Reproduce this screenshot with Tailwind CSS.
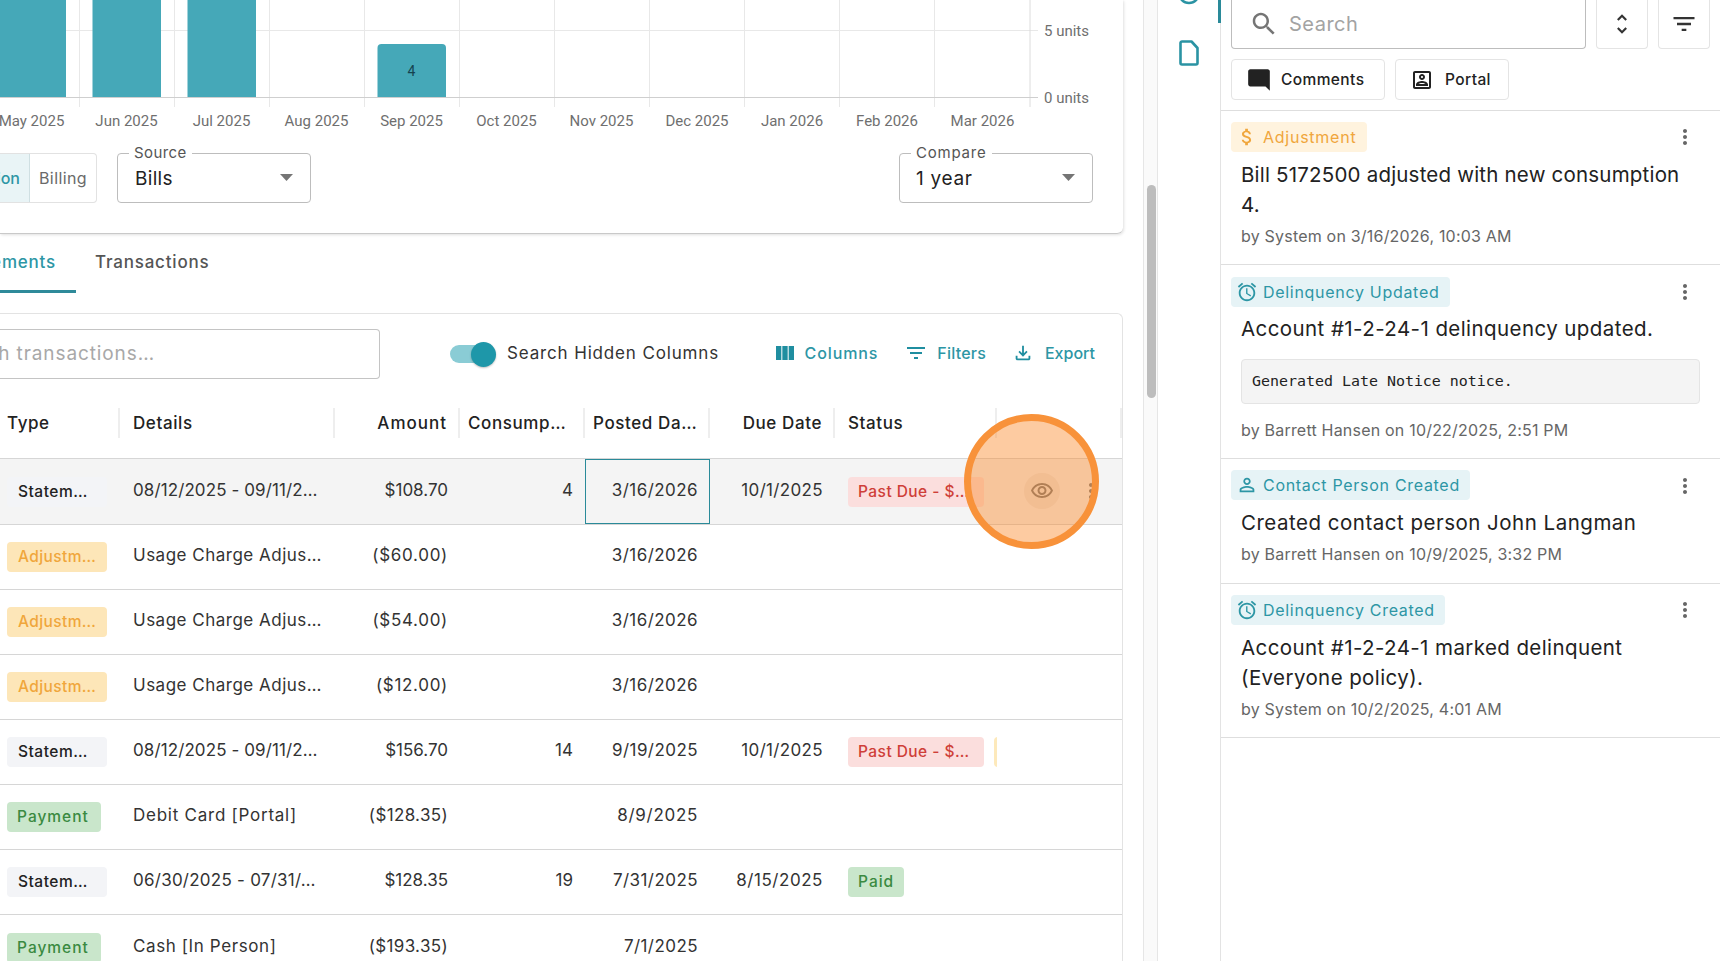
<!DOCTYPE html>
<html>
<head>
<meta charset="utf-8">
<script src="https://cdn.jsdelivr.net/npm/@tailwindcss/browser@4"></script>
</head>
<body class="bg-white">
<div class="relative flex h-[961px] w-[1720px] overflow-hidden bg-white font-['Inter',sans-serif] text-[#222]">

  <!-- MAIN COLUMN -->
  <main class="w-[1143px] shrink-0 overflow-hidden">
    <section class="h-[234px] w-[1123px] rounded-br-md border-b border-[#c9c9c9] shadow-[1px_1px_3px_rgba(0,0,0,0.12)]">
      <svg width="1123" height="130" class="block font-['Roboto',sans-serif]">
        <g stroke="#e8e8e8" stroke-width="1">
          <path d="M0 30.5H1038"/>
          <path d="M79.5 0V107M174.5 0V107M269.5 0V107M364.5 0V107M459.5 0V107M554.5 0V107M649.5 0V107M744.500 0V107M839.500 0V107M934.500 0V107"/>
          <path d="M1030 0V107" stroke="#dcdcdc"/>
        </g>
        <path d="M0 97.5H1038" stroke="#cfcfcf" stroke-width="1"/>
        <g fill="#45a8b8">
          <rect x="-10" y="-10" width="76" height="107"/>
          <rect x="92.5" y="-10" width="68.500" height="107"/>
          <rect x="187.5" y="-10" width="68.500" height="107"/>
          <path d="M377.500 97V48a4 4 0 0 1 4-4h60.500a4 4 0 0 1 4 4v49z"/>
        </g>
        <text x="411.5" y="76" text-anchor="middle" font-size="14" fill="#15434f">4</text>
        <g font-size="15" fill="#6f6f6f" text-anchor="middle">
          <text x="31.5" y="126">May 2025</text><text x="126.5" y="126">Jun 2025</text><text x="221.5" y="126">Jul 2025</text><text x="316.5" y="126">Aug 2025</text><text x="411.5" y="126">Sep 2025</text><text x="506.5" y="126">Oct 2025</text><text x="601.5" y="126">Nov 2025</text><text x="697" y="126">Dec 2025</text><text x="792" y="126">Jan 2026</text><text x="887" y="126">Feb 2026</text><text x="982.5" y="126">Mar 2026</text>
        </g>
        <g font-size="15" fill="#6f6f6f">
          <text x="1044" y="36">5 units</text><text x="1044" y="103">0 units</text>
        </g>
      </svg>
      <div class="mt-[23px] flex h-[50px] items-start pr-[30px]">
        <div class="flex h-[50px] w-[97px] overflow-hidden rounded-r border border-l-0 border-[#e2e2e2] text-[16px]">
          <div class="flex h-full w-[30px] shrink-0 items-center justify-end overflow-hidden border-r border-[#cfdfe2] bg-[#e9f4f6] pb-[1px] pr-[9px] font-medium text-[#2d96a5]">Consumption</div>
          <div class="flex items-center pb-[1px] pl-[9px] tracking-[0.4px] text-[#6a6a6a]">Billing</div>
        </div>
        <div class="relative ml-[20px] flex h-[50px] w-[194px] items-center rounded border border-[#bdbdbd] pl-[17px] pt-[2px] text-[19px] tracking-[0.3px] text-[#222]">
          Bills
          <span class="absolute -top-[10px] left-[11px] bg-white px-[5px] text-[15px] leading-[18px] tracking-[0.4px] text-[#555]">Source</span>
          <svg class="absolute right-[17px] top-[20px]" width="13" height="8" viewBox="0 0 13 8"><path d="M0 0h13L6.500 7z" fill="#757575"/></svg>
        </div>
        <div class="relative ml-auto flex h-[50px] w-[194px] items-center rounded border border-[#bdbdbd] pl-[16px] pt-[2px] text-[19px] tracking-[0.7px] text-[#222]">
          1 year
          <span class="absolute -top-[10px] left-[11px] bg-white px-[5px] text-[15px] leading-[18px] tracking-[0.8px] text-[#555]">Compare</span>
          <svg class="absolute right-[17px] top-[20px]" width="13" height="8" viewBox="0 0 13 8"><path d="M0 0h13L6.500 7z" fill="#757575"/></svg>
        </div>
      </div>
    </section>

    <div class="flex h-[59px] items-center text-[17px] tracking-[0.8px]">
      <div class="flex h-full w-[76px] items-center justify-end overflow-hidden border-b-[3px] border-[#2f8a9a] pr-[20px] pt-[2px] font-medium text-[#2d96a5]">Statements</div>
      <div class="ml-[19px] pb-[1px] font-medium text-[#555]">Transactions</div>
    </div>

    <section class="mt-[20px] w-[1123px] overflow-hidden rounded-tr-md border-r border-t border-[#e3e3e3]">
      <div class="flex h-[74px] items-start pr-[27px] pt-[15px]">
        <div class="flex h-[50px] w-[380px] items-center rounded-r border border-l-0 border-[#c4c4c4]">
          <div class="flex w-[155px] justify-end overflow-hidden whitespace-nowrap pt-[1px] text-[19px] tracking-[0.9px] text-[#a8a8a8]">Search transactions…</div>
        </div>
        <div class="relative ml-[70px] mt-[16px] h-[18px] w-[40px] rounded-full bg-[#8accd5]">
          <span class="absolute -right-[6px] -top-[3px] h-[25px] w-[25px] rounded-full bg-[#1e97a9] shadow-[0_1px_2px_rgba(0,0,0,0.25)]"></span>
        </div>
        <div class="ml-[17px] mt-[11px] whitespace-nowrap text-[17px] leading-[26px] tracking-[0.85px] text-[#333]">Search Hidden Columns</div>
        <div class="ml-auto mt-[11px] flex items-center gap-[26px] text-[16px] font-medium leading-[26px] text-[#2d96a5]">
          <span class="flex items-center gap-[8px] tracking-[0.9px]"><svg width="24" height="24" viewBox="0 0 24 24" fill="#1f8ea0"><path d="M14.670 5v14H9.330V5h5.340zm1 14H21V5h-5.330v14zm-7.340 0V5H3v14h5.330z"/></svg>Columns</span>
          <span class="flex items-center gap-[9px] tracking-[0.2px]"><svg width="24" height="24" viewBox="0 0 24 24" fill="#1f8ea0"><path d="M10 18h4v-2h-4v2zM3 6v2h18V6H3zm3 7h12v-2H6v2z"/></svg>Filters</span>
          <span class="flex items-center gap-[11px]"><svg width="22" height="22" viewBox="0 0 24 24" fill="#1f8ea0"><path d="M18 15v3H6v-3H4v3c0 1.100.9 2 2 2h12c1.100 0 2-.9 2-2v-3h-2zm-1-4-1.410-1.410L13 12.170V4h-2v8.170L8.410 9.590 7 11l5 5 5-5z"/></svg>Export</span>
        </div>
      </div>

      <div class="-ml-[5px] w-[1127px] text-[17px]">
        <!-- header -->
        <div class="grid h-[71px] grid-cols-[125px_215px_125px_125px_125px_125px_162px_125px] items-center border-b border-[#d6d6d6] font-medium tracking-[0.6px] text-[#222]">
          <div class="flex h-[30px] items-center border-r-2 border-[#eee] pl-[12px] pt-[2px]">Type</div>
          <div class="flex h-[30px] items-center border-r-2 border-[#eee] pl-[13px] pt-[2px]">Details</div>
          <div class="flex h-[30px] items-center justify-end border-r-2 border-[#eee] pr-[11px] pt-[2px] tracking-[1px]">Amount</div>
          <div class="flex h-[30px] items-center border-r-2 border-[#eee] pl-[8px] pt-[2px]">Consump…</div>
          <div class="flex h-[30px] items-center border-r-2 border-[#eee] pl-[8px] pt-[2px]">Posted Da…</div>
          <div class="flex h-[30px] items-center justify-end border-r-2 border-[#eee] pr-[11px] pt-[2px]">Due Date</div>
          <div class="flex h-[30px] items-center border-r-2 border-[#eee] pl-[13px] pt-[2px]">Status</div>
          <div class="flex h-[30px] items-center border-r-2 border-[#eee]"></div>
        </div>
        <!-- row 1 -->
        <div class="grid h-[66px] grid-cols-[125px_215px_125px_125px_125px_125px_162px_125px] items-center border-b border-[#d6d6d6] bg-[#f4f4f4] text-[#333]">
          <div class="pl-[12px]"><span class="flex h-[30px] w-[100px] items-center rounded bg-[#f3f4f7] pl-[11px] text-[15.5px] font-medium tracking-[0.5px] text-[#222]">Statem…</span></div>
          <div class="pb-[1px] pl-[13px] tracking-[0.1px]">08/12/2025 - 09/11/2…</div>
          <div class="pb-[1px] pr-[12px] text-right">$108.70</div>
          <div class="pb-[1px] pr-[12px] text-right">4</div>
          <div class="flex h-[65px] items-center justify-end border border-[#2a8a99] pb-[1px] pr-[11px] tracking-[0.44px]">3/16/2026</div>
          <div class="pb-[1px] pr-[12px] text-right tracking-[0.34px]">10/1/2025</div>
          <div class="pl-[13px]"><span class="flex h-[30px] w-[136px] items-center rounded bg-[#fbdedd] pl-[10px] text-[15.5px] font-medium tracking-[0.45px] text-[#cf3f38]">Past Due - $…</span></div>
          <div class="relative h-full">
            <span class="absolute left-[27px] top-[14px] flex h-[36px] w-[36px] items-center justify-center rounded-full bg-[#ebe7e4]">
              <svg width="24" height="24" viewBox="0 0 24 24" fill="#757575"><path d="M12 6c3.790 0 7.170 2.130 8.820 5.500C19.170 14.870 15.790 17 12 17s-7.170-2.130-8.820-5.500C4.830 8.130 8.210 6 12 6m0-2C7 4 2.730 7.110 1 11.500 2.730 15.890 7 19 12 19s9.270-3.110 11-7.500C21.270 7.110 17 4 12 4zm0 5c1.380 0 2.500 1.120 2.500 2.500S13.380 14 12 14s-2.500-1.120-2.500-2.500S10.620 9 12 9m0-2c-2.480 0-4.500 2.020-4.500 4.500S9.520 16 12 16s4.500-2.020 4.500-4.500S14.480 7 12 7z"/></svg>
            </span>
            <svg class="absolute left-[82px] top-[20px]" width="24" height="24" viewBox="0 0 24 24" fill="#757575"><path d="M12 8c1.100 0 2-.9 2-2s-.9-2-2-2-2 .9-2 2 .9 2 2 2zm0 2c-1.100 0-2 .9-2 2s.9 2 2 2 2-.9 2-2-.9-2-2-2zm0 6c-1.100 0-2 .9-2 2s.9 2 2 2 2-.9 2-2-.9-2-2-2z"/></svg>
          </div>
        </div>
        <!-- row 2 -->
        <div class="grid h-[65px] grid-cols-[125px_215px_125px_125px_125px_125px_162px_125px] items-center border-b border-[#d6d6d6] text-[#333]">
          <div class="pl-[12px]"><span class="flex h-[30px] w-[100px] items-center rounded bg-[#fde6b8] pl-[11px] text-[15.5px] font-medium tracking-[0.4px] text-[#f0a63c]">Adjustm…</span></div>
          <div class="pb-[2px] pl-[13px] tracking-[0.5px]">Usage Charge Adjus…</div>
          <div class="pb-[2px] pr-[12px] text-right tracking-[0.7px]">($60.00)</div>
          <div></div>
          <div class="pb-[2px] pr-[12px] text-right tracking-[0.44px]">3/16/2026</div>
          <div></div><div></div><div></div>
        </div>
        <!-- row 3 -->
        <div class="grid h-[65px] grid-cols-[125px_215px_125px_125px_125px_125px_162px_125px] items-center border-b border-[#d6d6d6] text-[#333]">
          <div class="pl-[12px]"><span class="flex h-[30px] w-[100px] items-center rounded bg-[#fde6b8] pl-[11px] text-[15.5px] font-medium tracking-[0.4px] text-[#f0a63c]">Adjustm…</span></div>
          <div class="pb-[2px] pl-[13px] tracking-[0.5px]">Usage Charge Adjus…</div>
          <div class="pb-[2px] pr-[12px] text-right tracking-[0.7px]">($54.00)</div>
          <div></div>
          <div class="pb-[2px] pr-[12px] text-right tracking-[0.44px]">3/16/2026</div>
          <div></div><div></div><div></div>
        </div>
        <!-- row 4 -->
        <div class="grid h-[65px] grid-cols-[125px_215px_125px_125px_125px_125px_162px_125px] items-center border-b border-[#d6d6d6] text-[#333]">
          <div class="pl-[12px]"><span class="flex h-[30px] w-[100px] items-center rounded bg-[#fde6b8] pl-[11px] text-[15.5px] font-medium tracking-[0.4px] text-[#f0a63c]">Adjustm…</span></div>
          <div class="pb-[2px] pl-[13px] tracking-[0.5px]">Usage Charge Adjus…</div>
          <div class="pb-[2px] pr-[12px] text-right tracking-[0.7px]">($12.00)</div>
          <div></div>
          <div class="pb-[2px] pr-[12px] text-right tracking-[0.44px]">3/16/2026</div>
          <div></div><div></div><div></div>
        </div>
        <!-- row 5 -->
        <div class="grid h-[65px] grid-cols-[125px_215px_125px_125px_125px_125px_162px_125px] items-center border-b border-[#d6d6d6] text-[#333]">
          <div class="pl-[12px]"><span class="flex h-[30px] w-[100px] items-center rounded bg-[#f3f4f7] pl-[11px] text-[15.5px] font-medium tracking-[0.5px] text-[#222]">Statem…</span></div>
          <div class="pb-[2px] pl-[13px] tracking-[0.1px]">08/12/2025 - 09/11/2…</div>
          <div class="pb-[2px] pr-[12px] text-right">$156.70</div>
          <div class="pb-[2px] pr-[12px] text-right">14</div>
          <div class="pb-[2px] pr-[12px] text-right tracking-[0.44px]">9/19/2025</div>
          <div class="pb-[2px] pr-[12px] text-right tracking-[0.34px]">10/1/2025</div>
          <div class="flex overflow-hidden pl-[13px]"><span class="flex h-[30px] w-[136px] shrink-0 items-center rounded bg-[#fbdedd] pl-[10px] text-[15.5px] font-medium tracking-[0.45px] text-[#cf3f38]">Past Due - $…</span><span class="ml-[10px] h-[30px] w-[20px] shrink-0 rounded bg-[#fde9bb]"></span></div>
          <div></div>
        </div>
        <!-- row 6 -->
        <div class="grid h-[65px] grid-cols-[125px_215px_125px_125px_125px_125px_162px_125px] items-center border-b border-[#d6d6d6] text-[#333]">
          <div class="pl-[12px]"><span class="flex h-[30px] w-[94px] items-center rounded bg-[#c9e6cb] pl-[10px] text-[15.5px] font-medium tracking-[1px] text-[#3a8a41]">Payment</span></div>
          <div class="pb-[2px] pl-[13px] tracking-[0.75px]">Debit Card [Portal]</div>
          <div class="pb-[2px] pr-[12px] text-right tracking-[0.35px]">($128.35)</div>
          <div></div>
          <div class="pb-[2px] pr-[12px] text-right tracking-[0.7px]">8/9/2025</div>
          <div></div><div></div><div></div>
        </div>
        <!-- row 7 -->
        <div class="grid h-[65px] grid-cols-[125px_215px_125px_125px_125px_125px_162px_125px] items-center border-b border-[#d6d6d6] text-[#333]">
          <div class="pl-[12px]"><span class="flex h-[30px] w-[100px] items-center rounded bg-[#f3f4f7] pl-[11px] text-[15.5px] font-medium tracking-[0.5px] text-[#222]">Statem…</span></div>
          <div class="pb-[2px] pl-[13px] tracking-[0.25px]">06/30/2025 - 07/31/…</div>
          <div class="pb-[2px] pr-[12px] text-right">$128.35</div>
          <div class="pb-[2px] pr-[12px] text-right">19</div>
          <div class="pb-[2px] pr-[12px] text-right tracking-[0.44px]">7/31/2025</div>
          <div class="pb-[2px] pr-[12px] text-right tracking-[0.55px]">8/15/2025</div>
          <div class="pl-[13px]"><span class="flex h-[30px] w-[56px] items-center rounded bg-[#c9e6cb] pl-[10px] text-[15.5px] font-medium tracking-[1px] text-[#3a8a41]">Paid</span></div>
          <div></div>
        </div>
        <!-- row 8 -->
        <div class="grid h-[65px] grid-cols-[125px_215px_125px_125px_125px_125px_162px_125px] items-center text-[#333]">
          <div class="pl-[12px]"><span class="flex h-[30px] w-[94px] items-center rounded bg-[#c9e6cb] pl-[10px] text-[15.5px] font-medium tracking-[1px] text-[#3a8a41]">Payment</span></div>
          <div class="pb-[2px] pl-[13px] tracking-[0.6px]">Cash [In Person]</div>
          <div class="pb-[2px] pr-[12px] text-right tracking-[0.35px]">($193.35)</div>
          <div></div>
          <div class="pb-[2px] pr-[12px] text-right tracking-[0.44px]">7/1/2025</div>
          <div></div><div></div><div></div>
        </div>
      </div>
    </section>
  </main>

  <!-- SCROLLBAR -->
  <div class="w-[15px] shrink-0 border-x border-[#e6e6e6] bg-[#fafafa] pl-[3px] pt-[185px]">
    <div class="h-[213px] w-[9px] rounded-full bg-[#bdbdbd]"></div>
  </div>

  <!-- SIDE NAV -->
  <nav class="relative flex w-[63px] shrink-0 flex-col items-center border-r border-[#e3e3e3]">
    <svg class="-mt-[19px]" width="24" height="24" viewBox="0 0 24 24" fill="none" stroke="#2a93a3" stroke-width="2.4"><circle cx="12" cy="12" r="10"/></svg>
    <svg class="mt-[35px]" width="20" height="26" viewBox="0 0 20 26" fill="none" stroke="#2a93a3" stroke-width="2.6" stroke-linejoin="round"><path d="M3 1.500h9.500l6 6.500v15a1.500 1.500 0 0 1-1.500 1.500H3A1.500 1.500 0 0 1 1.500 23V3A1.500 1.500 0 0 1 3 1.500z"/></svg>
    <span class="absolute -right-px top-0 h-[23px] w-[3px] bg-[#2a8a99]"></span>
  </nav>

  <!-- RIGHT PANEL -->
  <aside class="w-[499px] shrink-0">
    <div class="h-[111px] border-b border-[#dedede] pl-[10px] pr-[9px]">
      <div class="flex gap-[10px]">
        <div class="flex h-[49px] w-[355px] items-center rounded-b border border-t-0 border-[#bdbdbd] pl-[17px] text-[20px] tracking-[0.5px] text-[#a3a3a3]">
          <svg class="mr-[10px]" width="30" height="30" viewBox="0 0 24 24" fill="#757575"><path d="M15.500 14h-.79l-.28-.27C15.410 12.590 16 11.110 16 9.500 16 5.910 13.090 3 9.500 3S3 5.910 3 9.500 5.910 16 9.500 16c1.610 0 3.090-.59 4.230-1.570l.27.28v.79l5 4.990L20.490 19l-4.990-5zm-6 0C7.010 14 5 11.990 5 9.500S7.010 5 9.500 5 14 7.010 14 9.500 11.990 14 9.500 14z"/></svg>
          Search
        </div>
        <div class="flex h-[49px] w-[52px] items-center justify-center rounded-b border border-t-0 border-[#e4e4e4]">
          <svg width="26" height="26" viewBox="0 0 24 24" fill="#333"><path d="M12 5.830 15.170 9l1.410-1.410L12 3 7.410 7.590 8.830 9 12 5.830zm0 12.340L8.830 15l-1.410 1.410L12 21l4.590-4.590L15.170 15 12 18.170z"/></svg>
        </div>
        <div class="flex h-[49px] w-[52px] items-center justify-center rounded-b border border-t-0 border-[#e4e4e4]">
          <svg width="28" height="28" viewBox="0 0 24 24" fill="#333"><path d="M10 18h4v-2h-4v2zM3 6v2h18V6H3zm3 7h12v-2H6v2z"/></svg>
        </div>
      </div>
      <div class="mt-[10px] flex gap-[10px] text-[15.5px] font-medium tracking-[0.4px] text-[#222]">
        <div class="flex h-[41px] w-[154px] items-center gap-[9px] rounded border border-[#e4e4e4] pl-[14px]">
          <svg width="26" height="26" viewBox="0 0 24 24" fill="#222"><path d="M21.990 4c0-1.100-.89-2-1.990-2H4c-1.100 0-2 .9-2 2v12c0 1.100.9 2 2 2h14l4 4-.01-18z"/></svg>Comments
        </div>
        <div class="flex h-[41px] w-[114px] items-center gap-[11px] rounded border border-[#e4e4e4] pl-[14px]">
          <svg width="24" height="24" viewBox="0 0 24 24" fill="#222"><path d="M19 5v14H5V5h14m0-2H5c-1.110 0-2 .9-2 2v14c0 1.100.89 2 2 2h14c1.100 0 2-.9 2-2V5c0-1.100-.9-2-2-2zm-7 9c-1.650 0-3-1.350-3-3s1.350-3 3-3 3 1.350 3 3-1.350 3-3 3zm0-4c-.55 0-1 .45-1 1s.45 1 1 1 1-.45 1-1-.45-1-1-1zm6 10H6v-1.530c0-2.500 3.970-3.580 6-3.580s6 1.080 6 3.580V18zm-9.690-2h7.380c-.69-.56-2.380-1.120-3.690-1.120s-3.010.56-3.690 1.120z"/></svg>Portal
        </div>
      </div>
    </div>

    <!-- item 1 -->
    <article class="relative h-[154px] border-b border-[#dedede] pl-[10px] pt-[11px]">
      <span class="flex h-[30px] w-[136px] items-center gap-[5px] rounded bg-[#fff3de] pb-[1px] pl-[5px] text-[16px] tracking-[0.75px] text-[#f0a63c]"><svg width="22" height="22" viewBox="0 0 24 24" fill="#f0a63c"><path d="M11.800 10.900c-2.270-.59-3-1.200-3-2.150 0-1.090 1.010-1.850 2.700-1.850 1.780 0 2.440.85 2.500 2.100h2.210c-.07-1.720-1.120-3.300-3.210-3.810V3h-3v2.160c-1.940.42-3.500 1.680-3.500 3.610 0 2.310 1.910 3.460 4.700 4.130 2.500.6 3 1.480 3 2.410 0 .69-.49 1.790-2.700 1.790-2.060 0-2.870-.92-2.980-2.100h-2.200c.12 2.190 1.760 3.420 3.680 3.830V21h3v-2.150c1.950-.37 3.500-1.500 3.500-3.550 0-2.840-2.430-3.810-4.700-4.400z"/></svg>Adjustment</span>
      <svg class="absolute left-[452px] top-[14px]" width="24" height="24" viewBox="0 0 24 24" fill="#666"><path d="M12 8c1.100 0 2-.9 2-2s-.9-2-2-2-2 .9-2 2 .9 2 2 2zm0 2c-1.100 0-2 .9-2 2s.9 2 2 2 2-.9 2-2-.9-2-2-2zm0 6c-1.100 0-2 .9-2 2s.9 2 2 2 2-.9 2-2-.9-2-2-2z"/></svg>
      <p class="mt-[8px] w-[455px] pl-[10px] text-[20.5px] leading-[30px] tracking-[0.2px] text-[#222]">Bill 5172500 adjusted with new consumption 4.</p>
      <p class="mt-[4px] pl-[10px] text-[16px] leading-[24px] tracking-[0.2px] text-[#666]">by System on 3/16/2026, 10:03 AM</p>
    </article>

    <!-- item 2 -->
    <article class="relative h-[194px] border-b border-[#dedede] pl-[10px] pt-[12px]">
      <span class="flex h-[30px] w-[219px] items-center gap-[5px] rounded bg-[#e6f3f6] pb-[1px] pl-[5px] text-[16px] tracking-[0.7px] text-[#2d96a5]"><svg width="22" height="22" viewBox="0 0 24 24" fill="#2d96a5"><path d="M22 5.720l-4.600-3.860-1.290 1.530 4.600 3.860L22 5.720zM7.880 3.390L6.600 1.860 2 5.710l1.290 1.530 4.590-3.850zM12.500 8H11v6l4.750 2.850.75-1.230-4-2.370V8zM12 4c-4.970 0-9 4.030-9 9s4.020 9 9 9c4.970 0 9-4.030 9-9s-4.030-9-9-9zm0 16c-3.870 0-7-3.130-7-7s3.130-7 7-7 7 3.130 7 7-3.130 7-7 7z"/></svg>Delinquency Updated</span>
      <svg class="absolute left-[452px] top-[15px]" width="24" height="24" viewBox="0 0 24 24" fill="#666"><path d="M12 8c1.100 0 2-.9 2-2s-.9-2-2-2-2 .9-2 2 .9 2 2 2zm0 2c-1.100 0-2 .9-2 2s.9 2 2 2 2-.9 2-2-.9-2-2-2zm0 6c-1.100 0-2 .9-2 2s.9 2 2 2 2-.9 2-2-.9-2-2-2z"/></svg>
      <p class="mt-[7px] pl-[10px] text-[20.5px] leading-[30px] tracking-[0.42px] text-[#222]">Account #1-2-24-1 delinquency updated.</p>
      <div class="ml-[10px] mt-[15px] flex h-[45px] w-[459px] items-center rounded border border-[#e4e4e4] bg-[#f4f4f4] pb-[1px] pl-[10px] font-['DejaVu_Sans_Mono',monospace] text-[14.95px] text-[#222]">Generated Late Notice notice.</div>
      <p class="mt-[14px] pl-[10px] text-[16px] leading-[24px] tracking-[0.2px] text-[#666]">by Barrett Hansen on 10/22/2025, 2:51 PM</p>
    </article>

    <!-- item 3 -->
    <article class="relative h-[125px] border-b border-[#dedede] pl-[10px] pt-[11px]">
      <span class="flex h-[30px] w-[239px] items-center gap-[5px] rounded bg-[#e6f3f6] pb-[1px] pl-[5px] text-[16px] tracking-[0.7px] text-[#2d96a5]"><svg width="22" height="22" viewBox="0 0 24 24" fill="#2d96a5"><path d="M12 5.900c1.160 0 2.100.94 2.100 2.100s-.94 2.100-2.100 2.100S9.900 9.160 9.900 8s.94-2.100 2.100-2.100m0 9c2.970 0 6.100 1.460 6.100 2.100v1.100H5.900V17c0-.64 3.130-2.100 6.100-2.100M12 4C9.790 4 8 5.790 8 8s1.790 4 4 4 4-1.790 4-4-1.790-4-4-4zm0 9c-2.670 0-8 1.340-8 4v3h16v-3c0-2.660-5.330-4-8-4z"/></svg>Contact Person Created</span>
      <svg class="absolute left-[452px] top-[15px]" width="24" height="24" viewBox="0 0 24 24" fill="#666"><path d="M12 8c1.100 0 2-.9 2-2s-.9-2-2-2-2 .9-2 2 .9 2 2 2zm0 2c-1.100 0-2 .9-2 2s.9 2 2 2 2-.9 2-2-.9-2-2-2zm0 6c-1.100 0-2 .9-2 2s.9 2 2 2 2-.9 2-2-.9-2-2-2z"/></svg>
      <p class="mt-[8px] pl-[10px] text-[20.5px] leading-[30px] tracking-[0.5px] text-[#222]">Created contact person John Langman</p>
      <p class="mt-[4px] pl-[10px] text-[16px] leading-[24px] tracking-[0.2px] text-[#666]">by Barrett Hansen on 10/9/2025, 3:32 PM</p>
    </article>

    <!-- item 4 -->
    <article class="relative h-[154px] border-b border-[#dedede] pl-[10px] pt-[11px]">
      <span class="flex h-[30px] w-[214px] items-center gap-[5px] rounded bg-[#e6f3f6] pb-[1px] pl-[5px] text-[16px] tracking-[0.7px] text-[#2d96a5]"><svg width="22" height="22" viewBox="0 0 24 24" fill="#2d96a5"><path d="M22 5.720l-4.600-3.860-1.290 1.530 4.600 3.860L22 5.720zM7.880 3.390L6.600 1.860 2 5.710l1.290 1.530 4.590-3.850zM12.500 8H11v6l4.750 2.850.75-1.230-4-2.370V8zM12 4c-4.970 0-9 4.030-9 9s4.020 9 9 9c4.970 0 9-4.030 9-9s-4.030-9-9-9zm0 16c-3.870 0-7-3.130-7-7s3.130-7 7-7 7 3.130 7 7-3.130 7-7 7z"/></svg>Delinquency Created</span>
      <svg class="absolute left-[452px] top-[14px]" width="24" height="24" viewBox="0 0 24 24" fill="#666"><path d="M12 8c1.100 0 2-.9 2-2s-.9-2-2-2-2 .9-2 2 .9 2 2 2zm0 2c-1.100 0-2 .9-2 2s.9 2 2 2 2-.9 2-2-.9-2-2-2zm0 6c-1.100 0-2 .9-2 2s.9 2 2 2 2-.9 2-2-.9-2-2-2z"/></svg>
      <p class="mt-[8px] w-[465px] pl-[10px] text-[20.5px] leading-[30px] tracking-[0.4px] text-[#222]">Account #1-2-24-1 marked delinquent (Everyone policy).</p>
      <p class="mt-[4px] pl-[10px] text-[16px] leading-[24px] tracking-[0.2px] text-[#666]">by System on 10/2/2025, 4:01 AM</p>
    </article>
  </aside>

  <!-- Orange click highlight -->
  <div class="absolute left-[964px] top-[414px] h-[135px] w-[135px] rounded-full border-[7px] border-[#f8923a] bg-[#fb8c2e]/45"></div>
</div>
</body>
</html>
